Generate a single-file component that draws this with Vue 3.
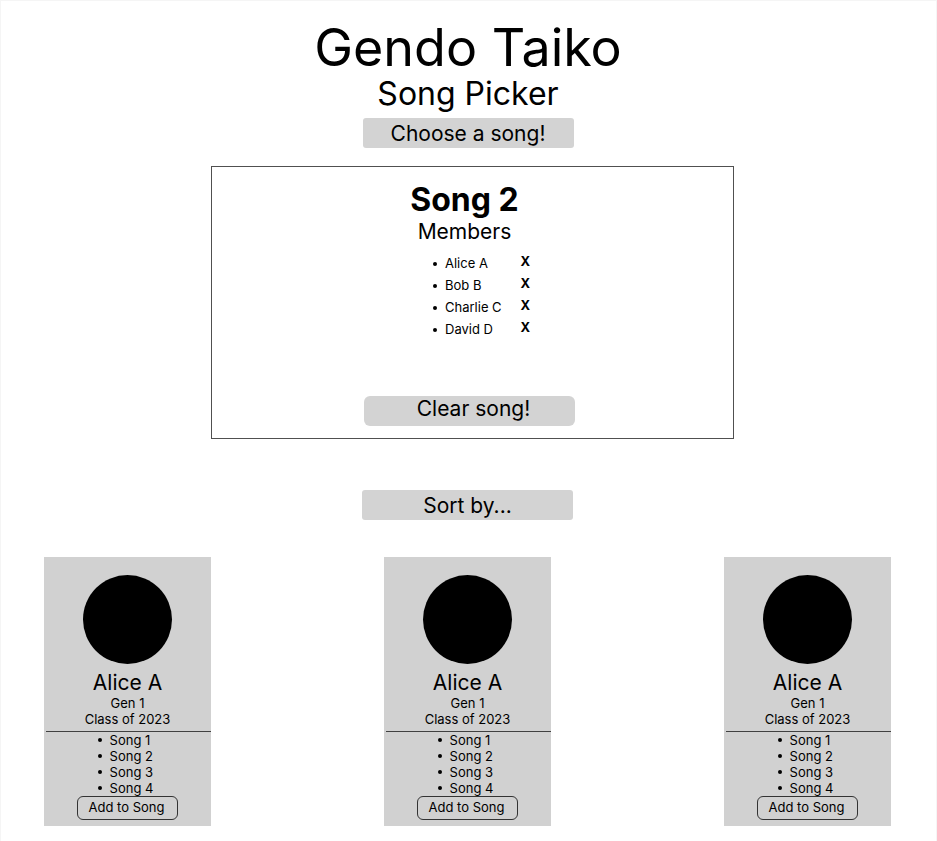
<script setup>
import { ref } from 'vue'

const song = ref('Song 2')
const members = ref(['Alice A', 'Bob B', 'Charlie C', 'David D'])

const players = ref(
  [1, 2, 3].map((id) => ({
    id,
    name: 'Alice A',
    generation: 'Gen 1',
    year: 'Class of 2023',
    songs: ['Song 1', 'Song 2', 'Song 3', 'Song 4'],
  }))
)

function removeMember(index) {
  members.value.splice(index, 1)
}

function clearSong() {
  members.value = []
}

function addToSong(player) {
  members.value.push(player.name)
}
</script>

<template>
  <div class="page">
    <header class="header">
      <h1 class="title">Gendo Taiko</h1>
      <p class="subtitle">Song Picker</p>
      <button type="button" class="bar">Choose a song!</button>
    </header>

    <main>
      <div class="panel-row">
        <section class="panel">
          <div class="panel-body">
            <h2 class="song">{{ song }}</h2>
            <h3 class="members-title">Members</h3>
            <ul class="members">
              <li v-for="(member, i) in members" :key="i" class="member">
                <span class="member-name">{{ member }}</span>
                <button type="button" class="remove" @click="removeMember(i)">X</button>
              </li>
            </ul>
          </div>
          <div class="panel-footer">
            <button type="button" class="bar bar-clear" @click="clearSong">Clear song!</button>
          </div>
        </section>
      </div>

      <div class="sort">
        <button type="button" class="bar">Sort by...</button>
      </div>

      <div class="cards">
        <article v-for="player in players" :key="player.id" class="card">
          <div class="avatar"></div>
          <h3 class="name">{{ player.name }}</h3>
          <p class="detail">{{ player.generation }}</p>
          <p class="detail">{{ player.year }}</p>
          <hr class="rule" />
          <ul class="songs">
            <li v-for="s in player.songs" :key="s">{{ s }}</li>
          </ul>
          <button type="button" class="add" @click="addToSong(player)">Add to Song</button>
        </article>
      </div>
    </main>
  </div>
</template>

<style>
body {
  margin: 0;
  background: #fff;
}
</style>

<style scoped>
.page {
  box-sizing: border-box;
  min-height: 100vh;
  padding: 18px 0 14px;
  border: 1px solid #f5f5f5;
  border-bottom: 0;
  font-family: Inter, sans-serif;
  font-size: 13px;
  line-height: 16px;
  color: #000;
}

h1,
h2,
h3,
p,
ul {
  margin: 0;
  padding: 0;
  font-weight: 400;
}

button {
  margin: 0;
  padding: 0;
  border: 0;
  background: none;
  font: inherit;
  color: inherit;
  cursor: pointer;
}

.header {
  display: flex;
  flex-direction: column;
  align-items: center;
  padding-right: 1px;
}

.title {
  font-size: 52px;
  line-height: 58px;
}

.subtitle {
  margin-bottom: 7px;
  font-size: 32px;
  line-height: 34px;
}

.bar {
  box-sizing: border-box;
  width: 211px;
  height: 30px;
  padding-top: 2px;
  border-radius: 3px;
  background: #d3d3d3;
  font-size: 21px;
  line-height: 28px;
}

.panel-row {
  display: flex;
  justify-content: center;
  padding: 18px 0 0 8px;
}

.panel {
  box-sizing: border-box;
  display: flex;
  flex-direction: column;
  justify-content: space-between;
  width: 100%;
  max-width: 523px;
  min-height: 273px;
  padding: 13px 0 12px;
  border: 1px solid #505050;
}

.panel-body {
  display: flex;
  flex-direction: column;
  align-items: center;
  padding-right: 16px;
}

.song {
  font-size: 32px;
  line-height: 40px;
  font-weight: 700;
}

.members-title {
  font-size: 21px;
  line-height: 24px;
}

.members {
  width: 97px;
  margin-top: 8px;
  padding-left: 34px;
  list-style: none;
}

.member {
  display: flex;
  align-items: flex-start;
  justify-content: space-between;
  height: 22px;
  line-height: 22px;
}

.member::before,
.songs li::before {
  content: '';
  flex: none;
  width: 4px;
  height: 4px;
  margin-right: 8px;
  border-radius: 50%;
  background: #000;
}

.member::before {
  margin-top: 10px;
}

.member-name {
  flex: 1;
}

.remove {
  font-weight: 700;
  line-height: 18px;
}

.panel-footer {
  display: flex;
  justify-content: center;
  padding-right: 6px;
}

.bar-clear {
  padding: 0 0 4px 8px;
  border-radius: 6px;
  line-height: 26px;
}

.sort {
  display: flex;
  justify-content: center;
  margin-top: 51px;
  padding-right: 2px;
}

.cards {
  display: flex;
  justify-content: space-between;
  margin-top: 37px;
  padding: 0 45px 0 43px;
}

.card {
  display: flex;
  flex-direction: column;
  align-items: center;
  width: 167px;
  padding: 18px 0 6px;
  background: #d1d1d1;
}

.avatar {
  width: 89px;
  height: 89px;
  border-radius: 50%;
  background: #000;
}

.name {
  margin-top: 6px;
  font-size: 21px;
  line-height: 25px;
}

.rule {
  align-self: stretch;
  height: 1px;
  margin: 4px 0 0 2px;
  border: 0;
  background: #404040;
}

.songs {
  padding-right: 4px;
  list-style: none;
}

.songs li {
  display: flex;
  align-items: center;
}

.add {
  box-sizing: border-box;
  width: 101px;
  height: 24px;
  padding: 0 2px 2px 0;
  border: 1px solid #333;
  border-radius: 6px;
  line-height: 20px;
}
</style>
